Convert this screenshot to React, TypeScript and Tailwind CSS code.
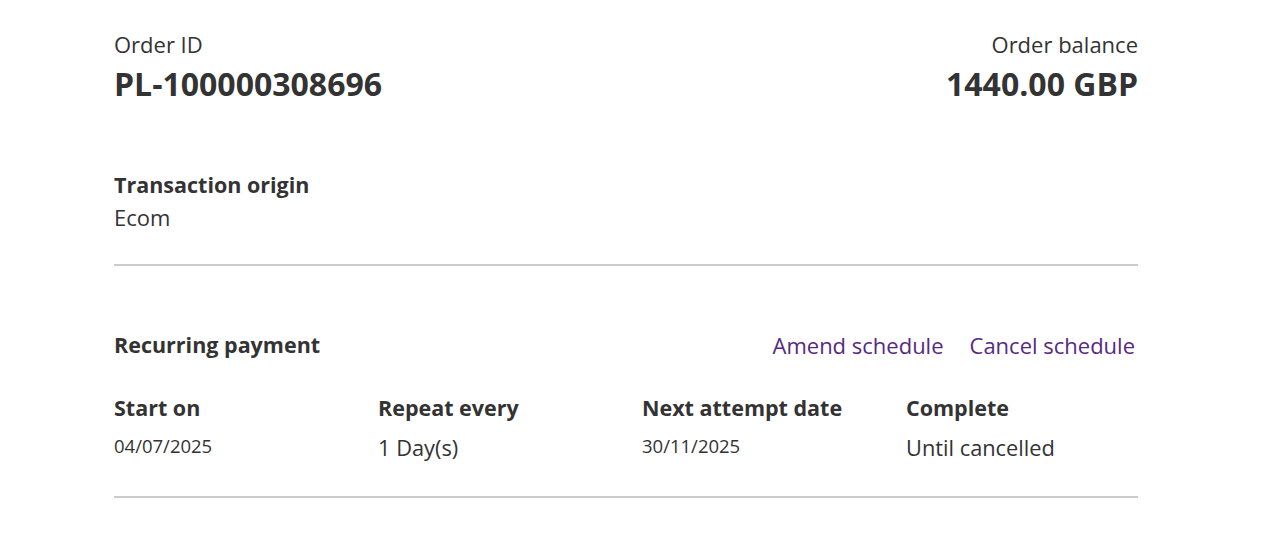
export default function App() {
  const cols = [
    { label: 'Start on', value: '04/07/2025', small: true },
    { label: 'Repeat every', value: '1 Day(s)', small: false },
    { label: 'Next attempt date', value: '30/11/2025', small: true },
    { label: 'Complete', value: 'Until cancelled', small: false },
  ];

  return (
    <div className="min-h-screen bg-white text-[#333333]" style={{ fontFamily: '"Open Sans", sans-serif' }}>
      <div className="ml-[114px] w-[1024px] pt-[29px]">
        {/* order header */}
        <div className="flex items-start justify-between">
          <div>
            <p className="text-[22px] leading-[30px]">Order ID</p>
            <p className="mt-[3px] text-[32px] font-bold leading-[44px]">PL-100000308696</p>
          </div>
          <div className="text-right">
            <p className="text-[22px] leading-[30px]">Order balance</p>
            <p className="mt-[3px] text-[32px] font-bold leading-[44px]">1440.00 GBP</p>
          </div>
        </div>

        {/* origin */}
        <div className="mt-[64px]">
          <p className="text-[21.5px] font-bold leading-[30px]">Transaction origin</p>
          <p className="mt-[2px] text-[22px] leading-[30px]">Ecom</p>
        </div>

        <div className="mt-[32px] h-[2px] bg-[#cccccc]" />

        {/* recurring */}
        <div className="mt-[64px] flex items-center justify-between">
          <p className="text-[21.5px] font-bold leading-[30px]">Recurring payment</p>
          <div className="flex gap-[26px] pr-[3px]">
            <a href="#" className="text-[22px] leading-[30px] text-[#58297f]">Amend schedule</a>
            <a href="#" className="text-[22px] leading-[30px] text-[#58297f]">Cancel schedule</a>
          </div>
        </div>

        <div className="mt-[33px] grid grid-cols-4 gap-8">
          {cols.map((c) => (
            <div key={c.label}>
              <p className="text-[21.5px] font-bold leading-[30px]">{c.label}</p>
              {c.small ? (
                <p className="mt-[10px] text-[18.5px] leading-[26px]">{c.value}</p>
              ) : (
                <p className="mt-[10px] text-[21.8px] leading-[30px]">{c.value}</p>
              )}
            </div>
          ))}
        </div>

        <div className="mt-[33px] h-[2px] bg-[#cccccc]" />
      </div>
    </div>
  );
}
